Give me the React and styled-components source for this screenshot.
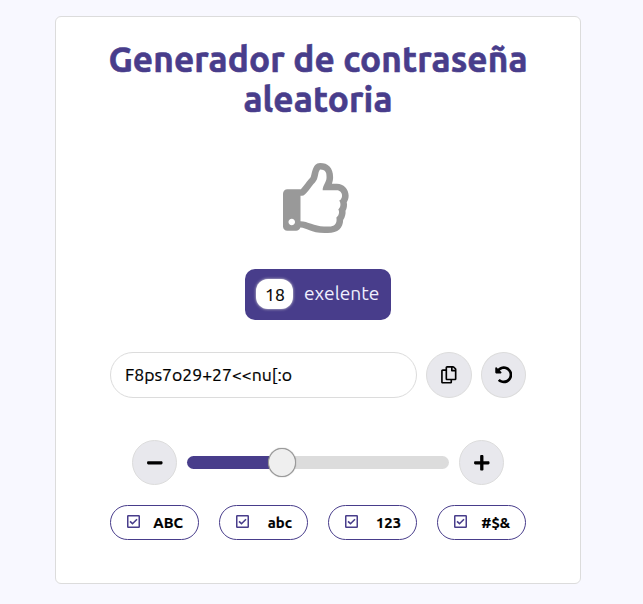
import React from "react";
import styled, { createGlobalStyle } from "styled-components";
import { FaRegThumbsUp, FaRegCopy, FaUndoAlt, FaMinus, FaPlus } from "react-icons/fa";

const GlobalStyle = createGlobalStyle`
  * { box-sizing: border-box; }
  body {
    margin: 0;
    background: #f8f8ff;
    font-family: Ubuntu, "Noto Sans", sans-serif;
    color: #000;
  }
`;

const Page = styled.main`
  min-height: 604px;
  padding: 16px 62px 20px 55px;
`;

const Card = styled.section`
  display: flex;
  flex-direction: column;
  align-items: center;
  height: 568px;
  padding: 22px 54px 0;
  background: #fff;
  border: 1px solid #dcdcdc;
  border-radius: 6px;
`;

const Title = styled.h1`
  display: flex;
  flex-direction: column;
  align-items: center;
  margin: 0;
  color: #483d8b;
  font-size: 35.2px;
  font-weight: 700;
  line-height: 40px;
  white-space: nowrap;
  -webkit-text-stroke: 0.6px #483d8b;
`;

const TitleLine = styled.span`
  letter-spacing: 0.1px;
`;

const Rating = styled.div`
  display: flex;
  margin-top: 44px;
  color: #999;
  font-size: 70px;
`;

const Badge = styled.div`
  display: flex;
  align-items: center;
  width: 146px;
  height: 51px;
  margin-top: 36px;
  padding: 0 0 1px 11px;
  gap: 11px;
  background: #483d8b;
  border-radius: 10px;
  color: #f0f0ff;
  font-size: 19.2px;
  line-height: 24px;
`;

const Count = styled.span`
  display: flex;
  align-items: center;
  justify-content: center;
  width: 37px;
  height: 30px;
  padding: 2px 0 0 1px;
  background: #fff;
  border-radius: 12px;
  box-shadow: 0 0 3px #dcdcdc;
  color: #000;
  font-size: 17.6px;
  -webkit-text-stroke: 0.2px #000;
`;

const Level = styled.span`
  padding-bottom: 2px;
  font-weight: 400;
`;

const PasswordRow = styled.div`
  display: flex;
  align-items: center;
  gap: 9px;
  width: 416px;
  margin-top: 32px;
`;

const PasswordInput = styled.input`
  width: 307px;
  height: 46px;
  padding: 0 14px 1px;
  background: #fff;
  border: 1px solid #dcdcdc;
  border-radius: 23px;
  outline: 0;
  color: #000;
  font: 17.6px Ubuntu, "Noto Sans", sans-serif;
  -webkit-text-stroke: 0.2px #000;
`;

const RoundButton = styled.button`
  display: flex;
  align-items: center;
  justify-content: center;
  flex: none;
  width: ${({ $width }) => $width}px;
  height: ${({ $height }) => $height}px;
  padding: 0;
  background: #e8e8ed;
  border: 1px solid #dcdcdc;
  border-radius: 50%;
  color: #000;
  font-size: 17.6px;
`;

const SliderRow = styled.div`
  display: flex;
  align-items: center;
  gap: 10px;
  margin-top: 42px;
`;

const Slider = styled.input`
  appearance: none;
  width: 262px;
  height: 13px;
  margin: 0;
  border-radius: 7px;
  background: linear-gradient(to right, #483d8b 36%, #dcdcdc 36%);

  &::-webkit-slider-thumb {
    appearance: none;
    width: 28px;
    height: 29px;
    background: #efefef;
    border: 1px solid #999;
    border-radius: 50%;
    box-shadow: 0 0 1px #777;
  }
`;

const Options = styled.div`
  display: grid;
  grid-template-columns: repeat(4, 89px);
  column-gap: 20px;
  margin-top: 20px;
`;

const Option = styled.button`
  display: flex;
  align-items: center;
  justify-content: space-between;
  height: 35px;
  padding: 0 15px 0 16px;
  background: #fff;
  border: 1px solid #483d8b;
  border-radius: 18px;
  color: #000;
  font: 700 14.8px/20px Ubuntu, "Noto Sans", sans-serif;
`;

const OptionLabel = styled.span`
  padding-top: 1px;
  -webkit-text-stroke: 0.2px #000;
`;

const CheckIcon = styled.svg`
  width: 13px;
  height: 13px;
  margin-top: -2px;
  fill: none;
  stroke: #483d8b;
`;

const options = ["ABC", "abc", "123", "#$&"];

export default function App() {
  return (
    <Page>
      <GlobalStyle />
      <Card>
        <Title>
          <TitleLine>Generador de contraseña</TitleLine>
          <TitleLine>aleatoria</TitleLine>
        </Title>
        <Rating><FaRegThumbsUp /></Rating>
        <Badge>
          <Count>18</Count>
          <Level>exelente</Level>
        </Badge>
        <PasswordRow>
          <PasswordInput aria-label="Contraseña" defaultValue="F8ps7o29+27<<nu[:o" spellCheck={false} />
          <RoundButton $width={46} $height={46} aria-label="Copiar"><FaRegCopy /></RoundButton>
          <RoundButton $width={45} $height={46} aria-label="Regenerar"><FaUndoAlt /></RoundButton>
        </PasswordRow>
        <SliderRow>
          <RoundButton $width={45} $height={45} aria-label="Menos"><FaMinus /></RoundButton>
          <Slider type="range" min="0" max="52" defaultValue="18" aria-label="Longitud" />
          <RoundButton $width={45} $height={45} aria-label="Más"><FaPlus /></RoundButton>
        </SliderRow>
        <Options>
          {options.map((label) => (
            <Option key={label}>
              <CheckIcon viewBox="0 0 13 13">
                <rect x="0.75" y="0.75" width="11.5" height="11.5" rx="0.5" strokeWidth="1.5" />
                <path d="M3 6.3 5.5 8.7 10 4.2" strokeWidth="1.6" />
              </CheckIcon>
              <OptionLabel>{label}</OptionLabel>
            </Option>
          ))}
        </Options>
      </Card>
    </Page>
  );
}
